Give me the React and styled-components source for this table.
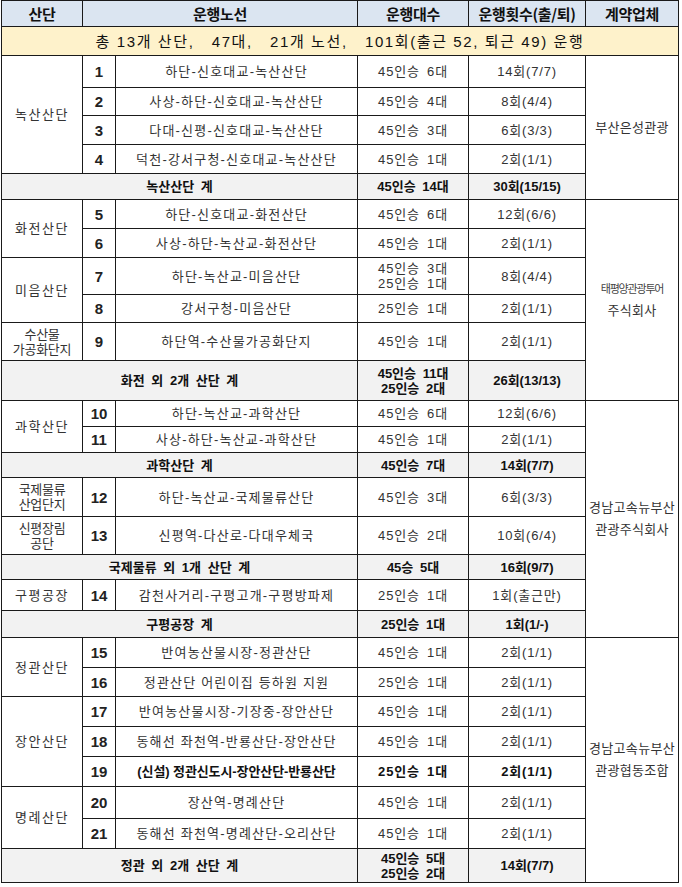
import React from 'react';
import styled, { createGlobalStyle } from 'styled-components';

const GlobalStyle = createGlobalStyle`
  html, body {
    margin: 0;
    padding: 0;
    background: #fff;
  }
  body {
    font-family: "Liberation Sans", "Noto Sans CJK KR", sans-serif;
    color: #222;
  }
`;

const rows = [
  { h: 32, group: { name: ['녹산산단'], span: 4 }, no: 1, route: '하단-신호대교-녹산산단', bus: ['45인승 6대'], trips: '14회(7/7)', company: { name: ['부산은성관광'], span: 5 } },
  { h: 28, no: 2, route: '사상-하단-신호대교-녹산산단', bus: ['45인승 4대'], trips: '8회(4/4)' },
  { h: 29, no: 3, route: '다대-신평-신호대교-녹산산단', bus: ['45인승 3대'], trips: '6회(3/3)' },
  { h: 29, no: 4, route: '덕천-강서구청-신호대교-녹산산단', bus: ['45인승 1대'], trips: '2회(1/1)' },
  { h: 26, total: '녹산산단 계', bus: ['45인승 14대'], trips: '30회(15/15)' },

  { h: 29, group: { name: ['화전산단'], span: 2 }, no: 5, route: '하단-신호대교-화전산단', bus: ['45인승 6대'], trips: '12회(6/6)', company: { name: ['태평양관광투어', '주식회사'], span: 6, squeeze: true } },
  { h: 29, no: 6, route: '사상-하단-녹산교-화전산단', bus: ['45인승 1대'], trips: '2회(1/1)' },
  { h: 37, group: { name: ['미음산단'], span: 2 }, no: 7, route: '하단-녹산교-미음산단', bus: ['45인승 3대', '25인승 1대'], trips: '8회(4/4)' },
  { h: 28, no: 8, route: '강서구청-미음산단', bus: ['25인승 1대'], trips: '2회(1/1)' },
  { h: 38, group: { name: ['수산물', '가공화단지'], span: 1, tight: true }, no: 9, route: '하단역-수산물가공화단지', bus: ['45인승 1대'], trips: '2회(1/1)' },
  { h: 40, total: '화전 외 2개 산단 계', bus: ['45인승 11대', '25인승 2대'], trips: '26회(13/13)' },

  { h: 26, group: { name: ['과학산단'], span: 2 }, no: 10, route: '하단-녹산교-과학산단', bus: ['45인승 6대'], trips: '12회(6/6)', company: { name: ['경남고속뉴부산', '관광주식회사'], span: 8 } },
  { h: 26, no: 11, route: '사상-하단-녹산교-과학산단', bus: ['45인승 1대'], trips: '2회(1/1)' },
  { h: 25, total: '과학산단 계', bus: ['45인승 7대'], trips: '14회(7/7)' },
  { h: 39, group: { name: ['국제물류', '산업단지'], span: 1, tight: true }, no: 12, route: '하단-녹산교-국제물류산단', bus: ['45인승 3대'], trips: '6회(3/3)' },
  { h: 38, group: { name: ['신평장림', '공단'], span: 1, tight: true }, no: 13, route: '신평역-다산로-다대우체국', bus: ['45인승 2대'], trips: '10회(6/4)' },
  { h: 25, total: '국제물류 외 1개 산단 계', bus: ['45승 5대'], trips: '16회(9/7)' },
  { h: 31, group: { name: ['구평공장'], span: 1 }, no: 14, route: '감천사거리-구평고개-구평방파제', bus: ['25인승 1대'], trips: '1회(출근만)' },
  { h: 27, total: '구평공장 계', bus: ['25인승 1대'], trips: '1회(1/-)' },

  { h: 30, group: { name: ['정관산단'], span: 2 }, no: 15, route: '반여농산물시장-정관산단', bus: ['45인승 1대'], trips: '2회(1/1)', company: { name: ['경남고속뉴부산', '관광협동조합'], span: 8 } },
  { h: 29, no: 16, route: '정관산단 어린이집 등하원 지원', bus: ['25인승 1대'], trips: '2회(1/1)' },
  { h: 30, group: { name: ['장안산단'], span: 3 }, no: 17, route: '반여농산물시장-기장중-장안산단', bus: ['45인승 1대'], trips: '2회(1/1)' },
  { h: 30, no: 18, route: '동해선 좌천역-반룡산단-장안산단', bus: ['45인승 1대'], trips: '2회(1/1)' },
  { h: 30, no: 19, route: '(신설) 정관신도시-장안산단-반룡산단', bus: ['25인승 1대'], trips: '2회(1/1)', strong: true },
  { h: 32, group: { name: ['명례산단'], span: 2 }, no: 20, route: '장산역-명례산단', bus: ['45인승 1대'], trips: '2회(1/1)' },
  { h: 30, no: 21, route: '동해선 좌천역-명례산단-오리산단', bus: ['45인승 1대'], trips: '2회(1/1)' },
  { h: 34, total: '정관 외 2개 산단 계', bus: ['45인승 5대', '25인승 2대'], trips: '14회(7/7)' },
];

const Lines = ({ items }) =>
  items.map((t, i) => (
    <React.Fragment key={i}>
      {i > 0 && <br />}
      {t}
    </React.Fragment>
  ));

export default function App() {
  return (
    <Page>
      <GlobalStyle />
      <Table>
        <colgroup>
          <col style={{ width: 81 }} />
          <col style={{ width: 33 }} />
          <col style={{ width: 242 }} />
          <col style={{ width: 111 }} />
          <col style={{ width: 117 }} />
          <col style={{ width: 93 }} />
        </colgroup>
        <thead>
          <Row $h={26}>
            <HeadCell>산단</HeadCell>
            <HeadCell colSpan={2}>운행노선</HeadCell>
            <HeadCell>운행대수</HeadCell>
            <HeadCell>운행횟수(출/퇴)</HeadCell>
            <HeadCell>계약업체</HeadCell>
          </Row>
        </thead>
        <tbody>
          <Row $h={29}>
            <SummaryCell colSpan={6}>
              총 13개 산단,   47대,   21개 노선,   101회(출근 52, 퇴근 49) 운행
            </SummaryCell>
          </Row>
          {rows.map((r, i) =>
            r.total ? (
              <Row key={i} $h={r.h}>
                <TotalCell colSpan={3}>{r.total}</TotalCell>
                <TotalCell>
                  <Lines items={r.bus} />
                </TotalCell>
                <TotalCell>{r.trips}</TotalCell>
              </Row>
            ) : (
              <Row key={i} $h={r.h}>
                {r.group && (
                  <GroupCell rowSpan={r.group.span} $tight={r.group.tight}>
                    <Lines items={r.group.name} />
                  </GroupCell>
                )}
                <NoCell>{r.no}</NoCell>
                <RouteCell $strong={r.strong}>{r.route}</RouteCell>
                <Cell $strong={r.strong}>
                  <Lines items={r.bus} />
                </Cell>
                <Cell $strong={r.strong}>{r.trips}</Cell>
                {r.company && (
                  <CompanyCell rowSpan={r.company.span}>
                    {r.company.squeeze ? (
                      <>
                        <Squeezed>{r.company.name[0]}</Squeezed>
                        <br />
                        {r.company.name[1]}
                      </>
                    ) : (
                      <Lines items={r.company.name} />
                    )}
                  </CompanyCell>
                )}
              </Row>
            )
          )}
        </tbody>
      </Table>
    </Page>
  );
}

const Page = styled.div`
  padding: 0 0 0 1px;
  width: 682px;
  box-sizing: border-box;
`;

const Table = styled.table`
  width: 677px;
  table-layout: fixed;
  border-collapse: collapse;
  border: 1px solid #111;
`;

const Row = styled.tr`
  height: ${(p) => p.$h}px;
`;

const BaseCell = styled.td`
  border: 1px solid #1a1a1a;
  padding: 0;
  text-align: center;
  vertical-align: middle;
  font-family: "Liberation Sans", "Noto Sans CJK KR", sans-serif;
  font-size: 13px;
  line-height: 15px;
  white-space: nowrap;
  overflow: hidden;
`;

const HeadCell = styled.th`
  border: 1px solid #1a1a1a;
  padding: 0;
  background: #dbe5f1;
  color: #111;
  font-family: "Noto Sans CJK KR", "Liberation Sans", sans-serif;
  font-size: 15px;
  font-weight: 700;
  letter-spacing: -0.3px;
  text-align: center;
  vertical-align: middle;
  white-space: nowrap;
`;

const SummaryCell = styled(BaseCell)`
  background: #fef2cb;
  font-size: 15px;
  color: #111;
  white-space: pre;
  letter-spacing: 1.6px;
`;

const GroupCell = styled(BaseCell)`
  letter-spacing: ${(p) => (p.$tight ? '-0.3px' : '1.5px')};
  color: #333;
`;

const NoCell = styled(BaseCell)`
  font-size: 15px;
  font-weight: 700;
  color: #222;
`;

const RouteCell = styled(BaseCell)`
  letter-spacing: ${(p) => (p.$strong ? '-0.1px' : '1.2px')};
  font-weight: ${(p) => (p.$strong ? 700 : 400)};
  color: ${(p) => (p.$strong ? '#111' : '#333')};
`;

const Cell = styled(BaseCell)`
  letter-spacing: 0.8px;
  word-spacing: 3px;
  font-weight: ${(p) => (p.$strong ? 700 : 400)};
  color: ${(p) => (p.$strong ? '#111' : '#333')};
`;

const TotalCell = styled(BaseCell)`
  background: #f2f2f2;
  font-weight: 700;
  color: #111;
  word-spacing: 3px;
`;

const CompanyCell = styled(BaseCell)`
  color: #333;
  line-height: 22px;
  letter-spacing: 0.3px;
`;

const Squeezed = styled.span`
  display: inline-block;
  font-size: 11px;
  letter-spacing: -1.2px;
  color: #444;
`;
